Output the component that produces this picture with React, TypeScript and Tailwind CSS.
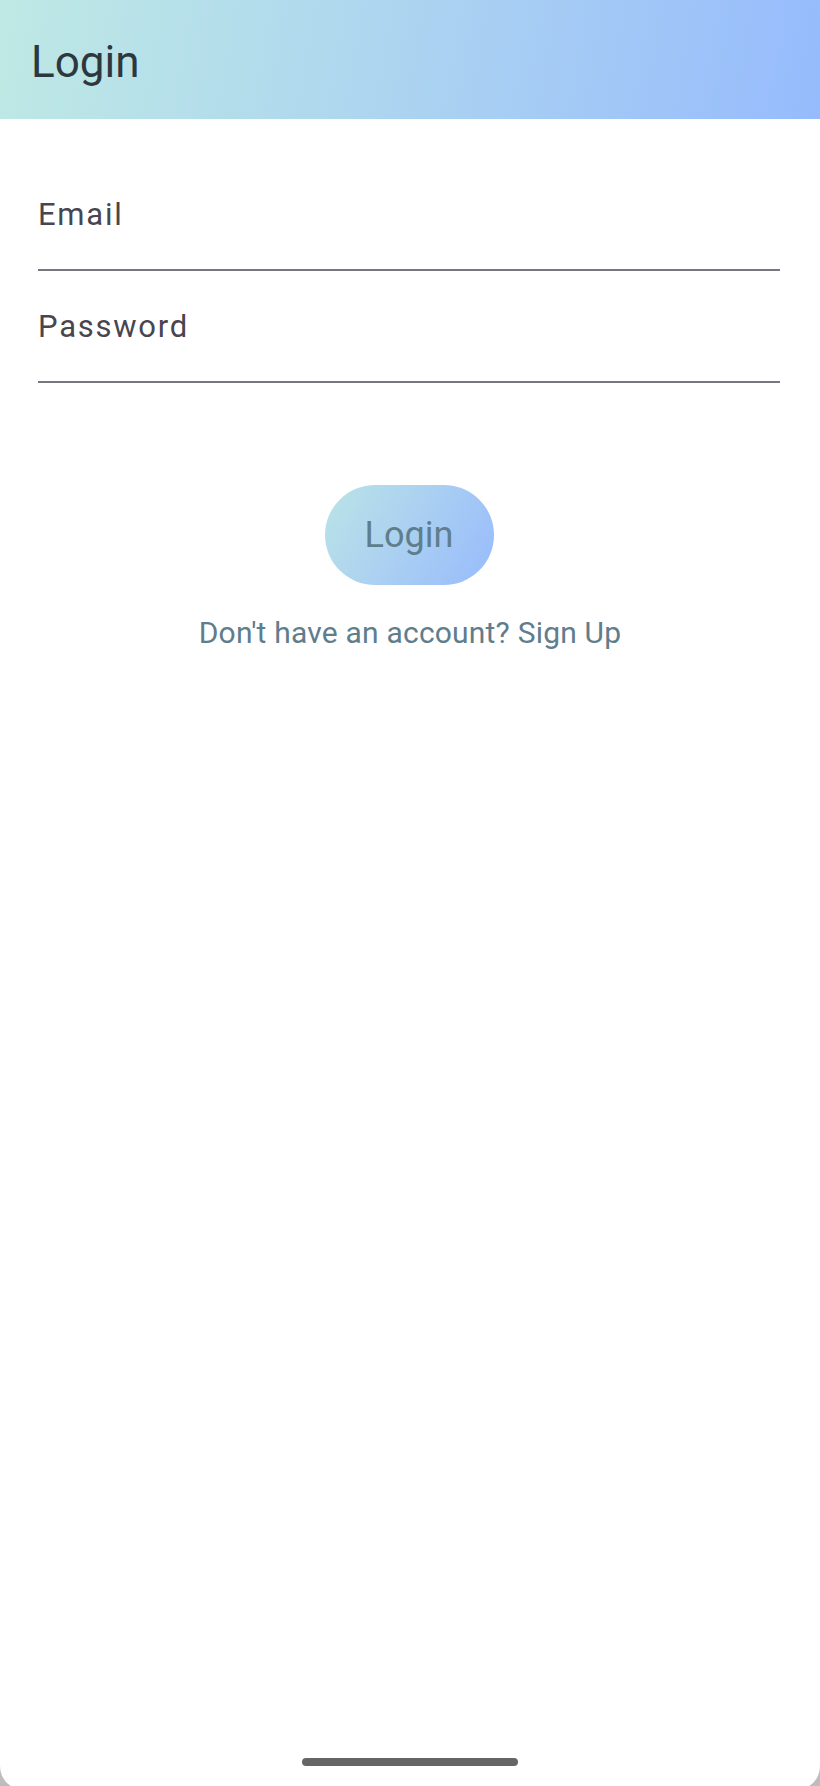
import React from "react";

export default function App() {
  return (
    <div className="h-[1786px] w-[820px] overflow-hidden bg-[#bdbdbd]" style={{ fontFamily: "Roboto, 'Noto Sans', sans-serif" }}>
      <div className="flex h-[1790px] flex-col rounded-b-[24px] bg-white">
        <header className="h-[119px] shrink-0 bg-[linear-gradient(100deg,#bee9e4_0%,#aed6ef_45%,#96bbfd_100%)] pl-[31px] pt-[40px]">
          <h1 className="text-[44px] leading-none font-normal text-[#2c383e]">Login</h1>
        </header>

        <div className="ml-[38px] mr-[40px] pt-[80px]">
          <div className="text-[31px] leading-none tracking-[1.75px] text-[#49454f]">Email</div>
          <div className="mt-[39px] h-[2px] bg-[#7a7680]" />
          <div className="mt-[40px] text-[31px] leading-none tracking-[1.75px] text-[#49454f]">Password</div>
          <div className="mt-[39px] h-[2px] bg-[#7a7680]" />
        </div>

        <div className="mt-[102px] flex flex-col items-center">
          <button className="mr-[2px] flex h-[100px] w-[169px] items-center justify-center rounded-full bg-[linear-gradient(120deg,#bae4e6_0%,#aacff2_50%,#97bbfc_100%)] text-[36px] leading-none text-[#5f7e8c]">
            Login
          </button>
          <div className="mt-[33px] text-[30px] leading-none tracking-[0.2px] text-[#607d8b]">
            Don't have an account? Sign Up
          </div>
        </div>

        <div className="mt-auto mb-[24px] flex justify-center">
          <div className="h-[8px] w-[216px] rounded-full bg-[#666666]" />
        </div>
      </div>
    </div>
  );
}
